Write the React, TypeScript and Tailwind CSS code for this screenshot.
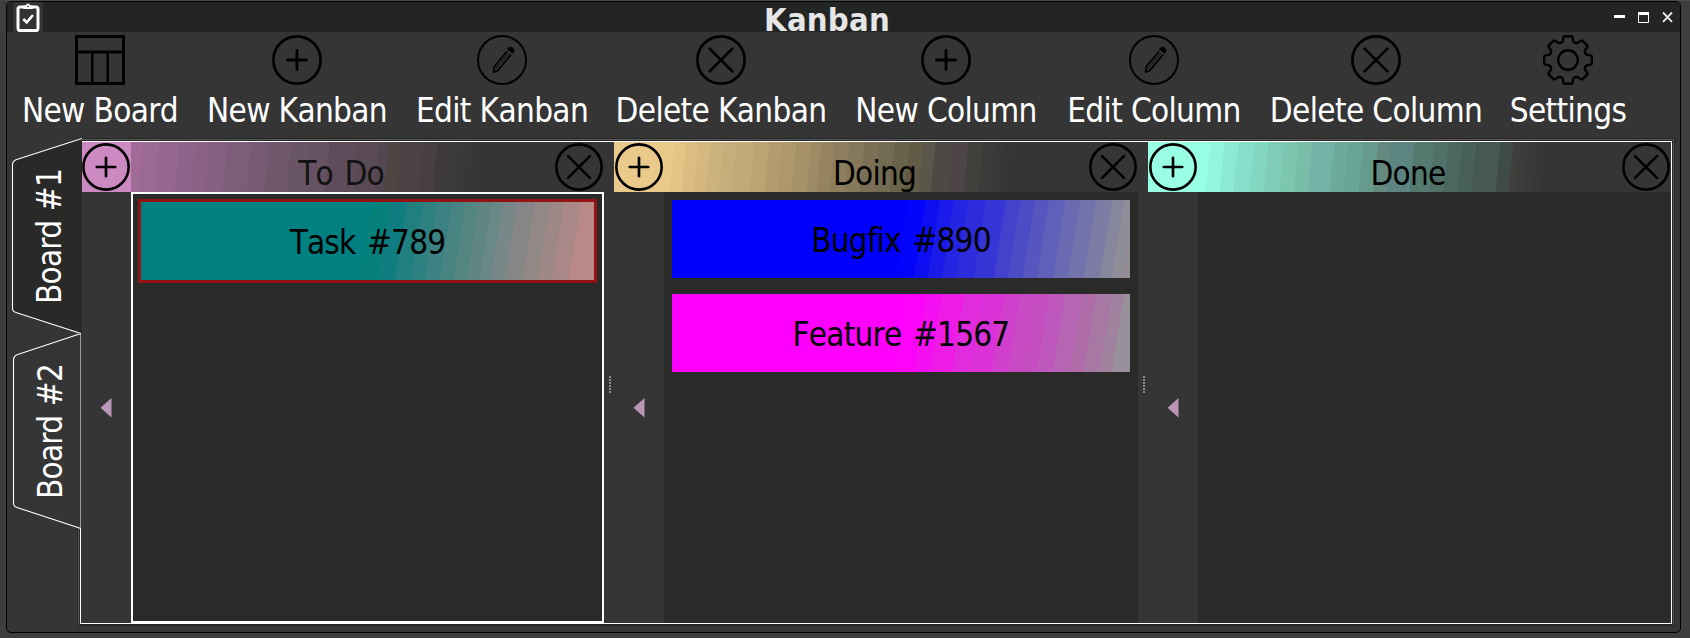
import type { ReactNode } from "react";

type Stop = [number, string];

/* Banded gradient: each stop is the x where a flat colour band begins (at mid height). */
function bands(angle: number, height: number, stops: Stop[]): string {
  const rad = (angle * Math.PI) / 180;
  const sin = Math.sin(rad);
  const offset = (height / 2) * Math.abs(Math.cos(rad));
  const parts = stops.map(([, color], i) => {
    const from = stops[i][0] * sin + offset;
    const to = i + 1 < stops.length ? stops[i + 1][0] * sin + offset : 4000;
    return `${color} ${i === 0 ? -50 : from}px ${to}px`;
  });
  return `linear-gradient(${angle}deg, ${parts.join(", ")})`;
}

const todoHeader: Stop[] = [
  [0, "#a06c97"], [10, "#9b6a93"], [26, "#966890"], [46, "#8f648a"], [62, "#8b6286"], [76, "#866083"],
  [94, "#7e5d7a"], [118, "#785a74"], [136, "#70586c"], [158, "#6a5566"], [176, "#665262"], [196, "#5f4c5a"],
  [224, "#594a54"], [246, "#534852"], [255, "#4f4644"], [268, "#4b4245"], [290, "#473f43"], [304, "#3f3b3d"],
  [316, "#3c3b3c"], [324, "#3a3a3a"], [332, "#383838"], [340, "#363636"], [346, "#353535"],
];
const doingHeader: Stop[] = [
  [0, "#e9ca8b"], [8, "#e6c386"], [20, "#ddbc82"], [32, "#d6b87f"], [44, "#ccb27c"], [57, "#c7ad7a"],
  [70, "#c3a878"], [88, "#bba374"], [103, "#b49b6e"], [116, "#ad976b"], [130, "#a69168"], [145, "#9c8b64"],
  [155, "#968461"], [168, "#8d7e5d"], [183, "#86785a"], [198, "#7b7055"], [213, "#736b52"], [228, "#68644b"],
  [243, "#635b46"], [257, "#5a564a"], [269, "#4f4945"], [286, "#4e4547"], [302, "#42403d"], [317, "#3c3b39"],
  [328, "#393938"], [336, "#373737"], [344, "#353535"],
];
const doneHeader: Stop[] = [
  [0, "#98ffe4"], [10, "#92f6dc"], [24, "#8ce9d2"], [38, "#87dfc9"], [54, "#84d8c2"], [68, "#80ccb6"],
  [84, "#7dc6b0"], [98, "#78bea8"], [112, "#74b3a7"], [134, "#6caa9a"], [148, "#69a595"], [163, "#659a8c"],
  [178, "#66897f"], [191, "#5c8480"], [214, "#547a70"], [234, "#507068"], [248, "#4b6860"], [262, "#47605a"],
  [276, "#455853"], [300, "#3f4b48"], [313, "#3f3f3e"], [320, "#3e3b3b"], [328, "#3a3939"], [336, "#373737"],
  [344, "#353535"],
];
const taskBands: Stop[] = [
  [0, "#008080"], [225, "#05807a"], [243, "#107e80"], [260, "#208080"], [276, "#2e8180"], [290, "#3c8282"],
  [305, "#488482"], [319, "#558580"], [332, "#608682"], [345, "#6a8888"], [356, "#788888"], [370, "#868686"],
  [388, "#928886"], [403, "#9e8887"], [417, "#aa8888"], [434, "#b88987"],
];
const bugBands: Stop[] = [
  [0, "#0000ff"], [230, "#0404fc"], [248, "#0e0ef2"], [262, "#1a1aea"], [276, "#2424e2"], [290, "#2c2cdc"],
  [308, "#3636d6"], [328, "#4242cc"], [342, "#4c4cc6"], [357, "#5656be"], [371, "#6060ba"], [387, "#6a6ab2"],
  [402, "#7272ac"], [418, "#7c7ca4"], [434, "#86869c"], [446, "#8e8e98"], [456, "#948c94"],
];
const featureBands: Stop[] = [
  [0, "#ff00ff"], [230, "#fc04fa"], [248, "#f40ef2"], [264, "#ee1ae6"], [286, "#e02cdc"], [305, "#da32d6"],
  [326, "#d040cc"], [342, "#c84ac4"], [357, "#c44ec0"], [371, "#be58bc"], [387, "#b664b4"], [404, "#b06ca8"],
  [418, "#a878a4"], [434, "#a0829e"], [446, "#98909a"],
];

function Glyph({ children, size = 50 }: { children: ReactNode; size?: number }) {
  return (
    <svg width={size} height={size} viewBox="0 0 50 50" fill="none" stroke="#000" className="shrink-0">
      {children}
    </svg>
  );
}

function BoardIcon() {
  return (
    <Glyph>
      <path d="M1.5 1.5H48.5V48.5H1.5Z" strokeWidth="3" />
      <path d="M1 17H49" strokeWidth="3" />
      <path d="M17.3 17V48M32.7 17V48" strokeWidth="2.6" />
    </Glyph>
  );
}

function PlusIcon({ size = 50 }: { size?: number }) {
  return (
    <Glyph size={size}>
      <circle cx="25" cy="25" r="23.6" strokeWidth="2.7" />
      <path d="M25 15.4V34.6M15.4 25H34.6" strokeWidth="2.8" strokeLinecap="round" />
    </Glyph>
  );
}

function CrossIcon({ size = 50 }: { size?: number }) {
  return (
    <Glyph size={size}>
      <circle cx="25" cy="25" r="23.6" strokeWidth="2.7" />
      <path d="M13.6 13.6L36.4 36.4M36.4 13.6L13.6 36.4" strokeWidth="2.7" strokeLinecap="round" />
    </Glyph>
  );
}

function PencilIcon() {
  return (
    <Glyph>
      <circle cx="25" cy="25" r="24" strokeWidth="1.9" />
      <path d="M30 16.3L17.2 31.8L16.6 37.2L20.6 35.6L34 19.6" strokeWidth="1.7" strokeLinejoin="round" />
      <path d="M31.6 18.2L18.6 33.6" strokeWidth="0.9" />
      <path d="M30.4 14.2C31.4 12 34.2 11.4 36 13.2C37.6 14.8 37 17.2 35.6 18.2Z" fill="#000" strokeWidth="0.8" />
    </Glyph>
  );
}

function gearPath(): string {
  const tooth = [
    [-6.6, -17.4], [-5.2, -18.8], [-4.6, -22.8], [-3.6, -23.8], [3.6, -23.8], [4.6, -22.8], [5.2, -18.8], [6.6, -17.4],
  ];
  const pts: string[] = [];
  for (let i = 0; i < 8; i++) {
    const a = (i * Math.PI) / 4;
    for (const [x, y] of tooth) {
      const px = 25 + x * Math.cos(a) - y * Math.sin(a);
      const py = 25 + x * Math.sin(a) + y * Math.cos(a);
      pts.push(`${px.toFixed(2)} ${py.toFixed(2)}`);
    }
  }
  return `M${pts.join("L")}Z`;
}

function GearIcon() {
  return (
    <Glyph>
      <path d={gearPath()} strokeWidth="2.4" strokeLinejoin="round" />
      <circle cx="25" cy="25" r="9.8" strokeWidth="2.4" />
    </Glyph>
  );
}

function Tool({ width, label, children }: { width: string; label: string; children: ReactNode }) {
  return (
    <button className={`flex shrink-0 flex-col items-center pt-[3px] ${width}`}>
      {children}
      <span className="mt-[6px] whitespace-nowrap leading-[40px] tracking-[-0.65px] text-white">{label}</span>
    </button>
  );
}

function Tab({ label, active }: { label: string; active?: boolean }) {
  return (
    <div className="relative flex h-[195px] w-[71px] items-center">
      <svg className="absolute left-0 top-0" width="75" height="196" viewBox="0 0 75 196" fill="none">
        {active ? (
          <>
            <path d="M75 0L9 21.5Q5.5 23 5.5 27V170Q5.5 173.5 9 174.5L75 196Z" fill="#292928" />
            <path d="M75 0.5L9 21.8Q5.5 23.4 5.5 27V170Q5.5 173.5 9 174.5L74 195.5" stroke="#fff" strokeWidth="1.1" />
          </>
        ) : (
          <>
            <path d="M73.5 0.5L10 21.8Q6.5 23.4 6.5 27V170Q6.5 173.5 10 174.5L73.5 195.5Z" fill="#353535" />
            <path d="M69.5 0V195H74V0Z" fill="#353535" />
            <path d="M73.5 1V195" stroke="#a595a3" />
            <path d="M74 0.5L10 21.8Q6.5 23.4 6.5 27V170Q6.5 173.5 10 174.5L74 195.5" stroke="#fff" strokeWidth="1.1" />
          </>
        )}
      </svg>
      <span
        className={`relative mt-[2px] rotate-180 whitespace-nowrap leading-[40px] text-white [word-spacing:1px] [writing-mode:vertical-rl] ${
          active ? "ml-[23px]" : "ml-[24px]"
        }`}
      >
        {label}
      </span>
    </div>
  );
}

function Card({ label, stops, selected }: { label: string; stops: Stop[]; selected?: boolean }) {
  return (
    <div className={selected ? "border-[3px] border-[#951212]" : ""}>
      <div
        className="flex h-[78px] items-center justify-center pt-1 leading-[40px] text-black"
        style={{ backgroundImage: bands(99, 78, stops) }}
      >
        <span>{label}</span>
      </div>
    </div>
  );
}

function Column(props: {
  title: string;
  titleColor: string;
  addColor: string;
  width: string;
  stripWidth: string;
  arrowInset?: string;
  stops: Stop[];
  body: string;
  children?: ReactNode;
}) {
  return (
    <section className={`flex shrink-0 flex-col ${props.width}`}>
      <header className="flex h-[50px]">
        <div className={`flex shrink-0 items-center ${props.stripWidth} ${props.addColor}`}>
          <PlusIcon size={48} />
        </div>
        <div className="flex flex-1 items-center" style={{ backgroundImage: bands(96, 50, props.stops) }}>
          <h2 className={`flex-1 pr-1 pt-[13px] text-center leading-[37px] ${props.titleColor}`}>{props.title}</h2>
          <div className="mr-px">
            <CrossIcon size={48} />
          </div>
        </div>
      </header>
      <div className="flex min-h-0 flex-1">
        <div
          className={`flex shrink-0 items-center justify-center bg-[#353535] ${props.stripWidth} ${props.arrowInset ?? ""}`}
        >
          <svg width="12" height="20" viewBox="0 0 12 20">
            <path d="M0.5 9.7L11.5 0V19.4Z" fill="#bb96b6" />
          </svg>
        </div>
        <div className={`flex flex-1 flex-col bg-[#2a2a28] ${props.body}`}>{props.children}</div>
      </div>
    </section>
  );
}

function Splitter() {
  return (
    <div className="flex w-[10px] shrink-0 flex-col items-start gap-px pl-[5px] pt-[234px]">
      {[0, 1, 2, 3, 4, 5].map((n) => (
        <i key={n} className="size-[2px] bg-[#858b88]" />
      ))}
    </div>
  );
}

export default function App() {
  return (
    <div className="h-[638px] w-[1690px] overflow-hidden border-t border-[#4a4a4a] bg-[#3e3e3e] pl-[6px] font-['DejaVu_Sans_Condensed','DejaVu_Sans',sans-serif] text-[33px] tracking-[-0.8px] [font-kerning:none] [font-stretch:condensed] [word-spacing:3px]">
      <div className="flex h-[632px] w-[1675px] flex-col overflow-hidden rounded-[5px] border border-black bg-[#353535]">
        <div className="flex h-[30px] shrink-0 items-start bg-[#232524]">
          <div className="ml-[6px] flex h-[30px] w-[30px] justify-center bg-[#333333] pt-px">
            <svg width="24" height="29" viewBox="0 0 24 29" fill="none" stroke="#fff">
              <rect x="2" y="4" width="20" height="23.6" rx="2" strokeWidth="3" />
              <path d="M8 5V3.5H10Q12 -0.6 14 3.5H16V5Z" fill="#333" strokeWidth="2" strokeLinejoin="round" />
              <path d="M7.3 16L10.7 19.4L17 12" strokeWidth="2.6" />
            </svg>
          </div>
          <h1 className="flex-1 pr-[2px] text-center text-[32.5px] font-bold leading-[37px] tracking-[0.2px] text-[#e6e6e6]">
            Kanban
          </h1>
          <svg className="mt-[9px]" width="67" height="14" viewBox="0 0 67 14" fill="none">
            <rect x="1" y="4" width="11" height="3" fill="#fff" />
            <path d="M25.5 1V11.5H35.5V1" stroke="#fff" />
            <rect x="25" y="1" width="11" height="3" fill="#fff" />
            <path d="M50 1.5L59 10.8M59 1.5L50 10.8" stroke="#e8e8e8" strokeWidth="1.8" />
          </svg>
        </div>

        <nav className="flex h-[106px] shrink-0">
          <Tool width="w-[186px]" label="New Board"><BoardIcon /></Tool>
          <Tool width="w-[208px]" label="New Kanban"><PlusIcon /></Tool>
          <Tool width="w-[202px]" label="Edit Kanban"><PencilIcon /></Tool>
          <Tool width="w-[236px]" label="Delete Kanban"><CrossIcon /></Tool>
          <Tool width="w-[214px]" label="New Column"><PlusIcon /></Tool>
          <Tool width="w-[202px]" label="Edit Column"><PencilIcon /></Tool>
          <Tool width="w-[242px]" label="Delete Column"><CrossIcon /></Tool>
          <Tool width="w-[142px]" label="Settings"><GearIcon /></Tool>
        </nav>

        <main className="flex h-[488px]">
          <aside className="z-10 w-[70px] shrink-0">
            <Tab label="Board #1" active />
            <Tab label="Board #2" />
          </aside>
          <div className="w-[1598px] border border-[#252525]">
            <div className="h-full border border-b-0 border-[#585858]">
              <div className="h-full border border-[#252525]">
                <div className="flex h-full border border-white bg-[#353535] pl-px">
                  <Column
                    title="To Do"
                    titleColor="text-[#121212]"
                    addColor="bg-[#cd89c1]"
                    width="w-[522px]"
                    stripWidth="w-[49px]"
                    arrowInset="pr-px"
                    stops={todoHeader}
                    body="border-2 border-white p-[5px]"
                  >
                    <Card label="Task #789" stops={taskBands} selected />
                  </Column>
                  <Splitter />
                  <Column
                    title="Doing"
                    titleColor="text-black"
                    addColor="bg-[#e9ca8b] pl-px"
                    width="w-[524px]"
                    stripWidth="w-[50px]"
                    stops={doingHeader}
                    body="gap-4 p-2"
                  >
                    <Card label="Bugfix #890" stops={bugBands} />
                    <Card label="Feature #1567" stops={featureBands} />
                  </Column>
                  <Splitter />
                  <Column
                    title="Done"
                    titleColor="text-black"
                    addColor="bg-[#98ffe4] pl-px"
                    width="w-[523px]"
                    stripWidth="w-[50px]"
                    stops={doneHeader}
                    body=""
                  />
                </div>
              </div>
            </div>
          </div>
        </main>
      </div>
    </div>
  );
}
